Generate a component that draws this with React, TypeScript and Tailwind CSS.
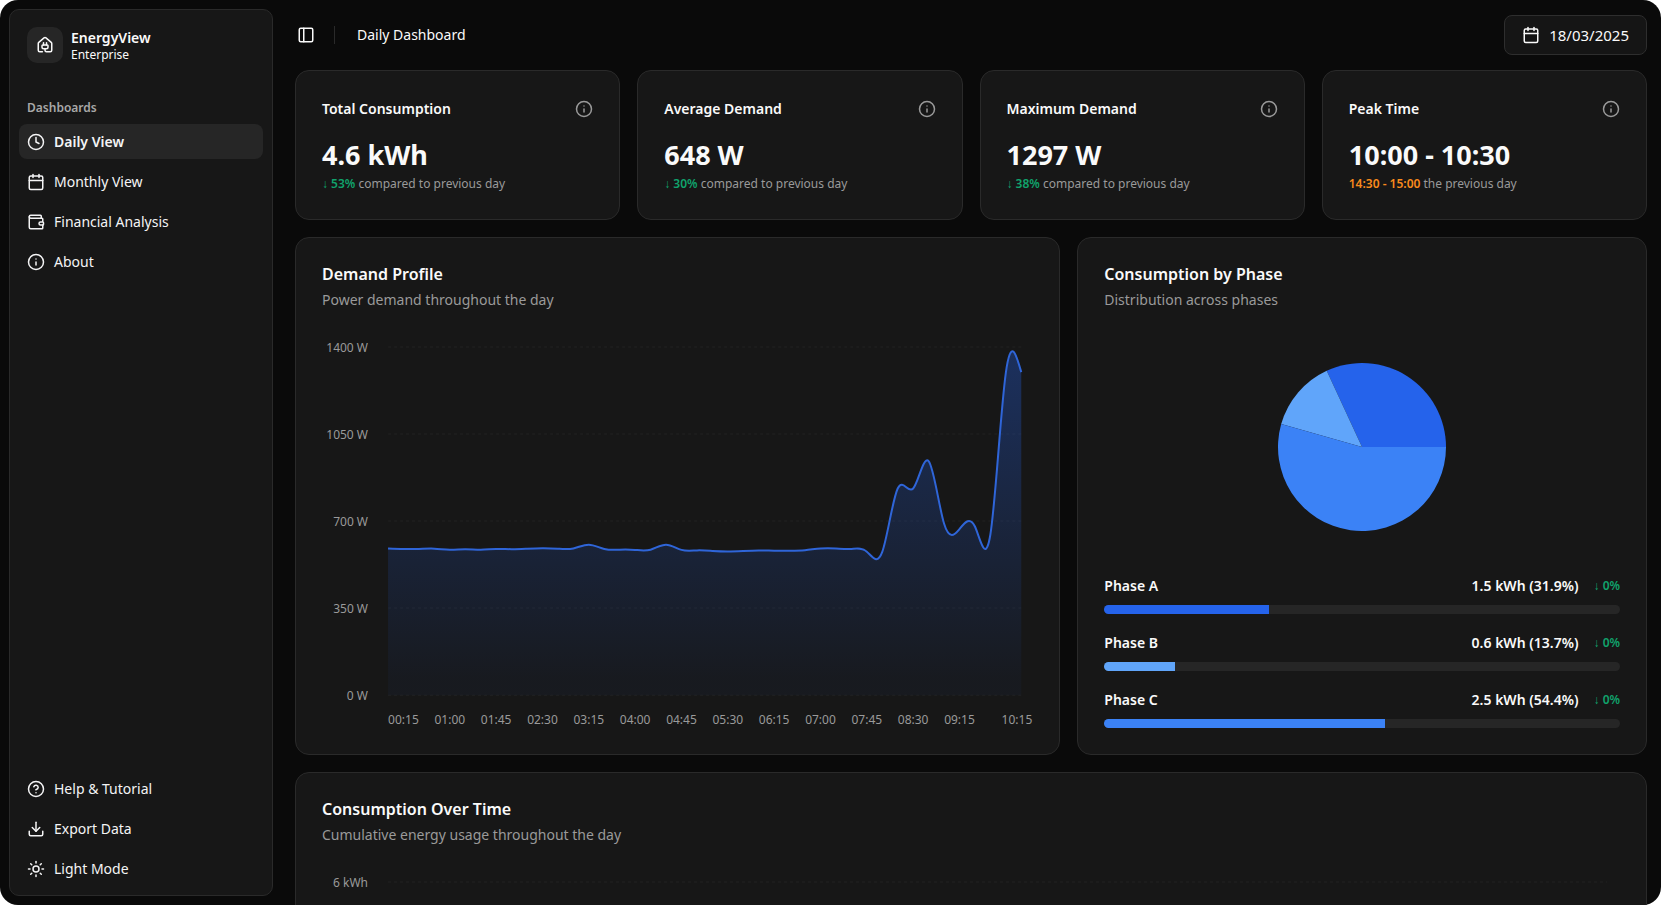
import React from "react";
import {
  Calendar,
  CircleHelp,
  Clock,
  Download,
  HousePlug,
  Info,
  PanelLeft,
  Sun,
  Wallet,
} from "lucide-react";
import type { LucideIcon } from "lucide-react";

type NavEntry = { label: string; icon: LucideIcon; active?: boolean };

const dashboards: NavEntry[] = [
  { label: "Daily View", icon: Clock, active: true },
  { label: "Monthly View", icon: Calendar },
  { label: "Financial Analysis", icon: Wallet },
  { label: "About", icon: Info },
];

const utilities: NavEntry[] = [
  { label: "Help & Tutorial", icon: CircleHelp },
  { label: "Export Data", icon: Download },
  { label: "Light Mode", icon: Sun },
];

const stats = [
  { title: "Total Consumption", value: "4.6 kWh", accent: "↓ 53%", note: "compared to previous day", tone: "text-[#10a36c]" },
  { title: "Average Demand", value: "648 W", accent: "↓ 30%", note: "compared to previous day", tone: "text-[#10a36c]" },
  { title: "Maximum Demand", value: "1297 W", accent: "↓ 38%", note: "compared to previous day", tone: "text-[#10a36c]" },
  { title: "Peak Time", value: "10:00 - 10:30", accent: "14:30 - 15:00", note: "the previous day", tone: "text-[#f98a1c]" },
];

const phases = [
  { name: "Phase A", kwh: "1.5 kWh", share: 31.9, fill: "#2563eb" },
  { name: "Phase B", kwh: "0.6 kWh", share: 13.7, fill: "#60a5fa" },
  { name: "Phase C", kwh: "2.5 kWh", share: 54.4, fill: "#3b82f6" },
];

// Average demand in watts for every quarter of an hour from 00:00 to 10:15.
const demand = [
  590, 588, 588, 589, 585, 587, 585, 588, 587, 589, 591, 589, 590, 605, 588, 585, 584, 585, 605, 584, 582,
  580, 578, 580, 582, 581, 581, 583, 590, 590, 588, 577, 576, 831, 831, 941, 690, 668, 678, 646, 1296, 1299,
];

const timeLabels = [
  "00:15", "01:00", "01:45", "02:30", "03:15", "04:00", "04:45", "05:30",
  "06:15", "07:00", "07:45", "08:30", "09:15",
];

const plot = { left: 66, right: 699, top: 12, bottom: 360, max: 1400 };
const step = (plot.right - plot.left) / (demand.length - 1);

// Control points of a natural cubic spline along one axis.
function controlPoints(v: number[]): [number[], number[]] {
  const n = v.length - 1;
  const a = new Array<number>(n);
  const b = new Array<number>(n);
  const r = new Array<number>(n);
  a[0] = 0;
  b[0] = 2;
  r[0] = v[0] + 2 * v[1];
  for (let i = 1; i < n - 1; i++) {
    a[i] = 1;
    b[i] = 4;
    r[i] = 4 * v[i] + 2 * v[i + 1];
  }
  a[n - 1] = 2;
  b[n - 1] = 7;
  r[n - 1] = 8 * v[n - 1] + v[n];
  for (let i = 1; i < n; i++) {
    const m = a[i] / b[i - 1];
    b[i] -= m;
    r[i] -= m * r[i - 1];
  }
  a[n - 1] = r[n - 1] / b[n - 1];
  for (let i = n - 2; i >= 0; i--) a[i] = (r[i] - a[i + 1]) / b[i];
  b[n - 1] = (v[n] + a[n - 1]) / 2;
  for (let i = 0; i < n - 1; i++) b[i] = 2 * v[i + 1] - a[i + 1];
  return [a, b];
}

function splinePath(xs: number[], ys: number[]): string {
  const [ax, bx] = controlPoints(xs);
  const [ay, by] = controlPoints(ys);
  let d = `M${xs[0]},${ys[0]}`;
  for (let i = 0; i < xs.length - 1; i++) {
    d += `C${ax[i]},${ay[i]},${bx[i]},${by[i]},${xs[i + 1]},${ys[i + 1]}`;
  }
  return d;
}

const demandLine = splinePath(
  demand.map((_, i) => plot.left + i * step),
  demand.map((w) => plot.bottom - (w / plot.max) * (plot.bottom - plot.top)),
);

function Card({ className = "", children }: { className?: string; children: React.ReactNode }) {
  return (
    <section className={`rounded-[14px] border border-[#2a2a2a] bg-[#171717] p-[26px] ${className}`}>{children}</section>
  );
}

function CardHeading({ title, subtitle }: { title: string; subtitle: string }) {
  return (
    <header>
      <h2 className="text-base leading-5 font-semibold text-[#fafafa]">{title}</h2>
      <p className="mt-[5px] text-sm leading-[22px] text-[#9a9a9a]">{subtitle}</p>
    </header>
  );
}

function NavButton({ entry }: { entry: NavEntry }) {
  const Icon = entry.icon;
  return (
    <li>
      <a
        href="#"
        aria-current={entry.active ? "page" : undefined}
        className={`flex h-[35px] items-center gap-[9px] rounded-lg px-2 text-sm text-[#f4f4f5] ${
          entry.active ? "bg-[#262626] font-semibold" : ""
        }`}
      >
        <Icon className="size-[18px]" />
        <span>{entry.label}</span>
      </a>
    </li>
  );
}

function Sidebar() {
  return (
    <aside className="flex w-[264px] shrink-0 flex-col rounded-[10px] border border-[#2a2a2a] bg-[#171717] px-[9px] pt-[17px] pb-[9px]">
      <div className="flex items-center gap-2 px-2">
        <div className="flex size-9 items-center justify-center rounded-[10px] bg-[#262626] text-[#fafafa]">
          <HousePlug className="size-[18px]" />
        </div>
        <div className="pt-[2px] text-[#fafafa]">
          <div className="text-sm leading-[17px] font-semibold">EnergyView</div>
          <div className="text-xs leading-[17px]">Enterprise</div>
        </div>
      </div>
      <nav aria-label="Dashboards" className="mt-9">
        <h2 className="px-2 text-xs leading-[18px] font-semibold text-[#a8a8a8]">Dashboards</h2>
        <ul className="mt-[7px] flex flex-col gap-[5px]">
          {dashboards.map((entry) => (
            <NavButton key={entry.label} entry={entry} />
          ))}
        </ul>
      </nav>
      <ul className="mt-auto flex flex-col gap-[5px]">
        {utilities.map((entry) => (
          <NavButton key={entry.label} entry={entry} />
        ))}
      </ul>
    </aside>
  );
}

function TopBar() {
  return (
    <header className="flex h-[70px] items-center">
      <button type="button" aria-label="Toggle sidebar" className="ml-[2px] text-[#fafafa]">
        <PanelLeft className="size-[18px]" />
      </button>
      <div className="ml-[19px] h-[18px] w-px bg-[#2a2a2a]" />
      <h1 className="ml-[22px] text-sm text-[#fafafa]">Daily Dashboard</h1>
      <button
        type="button"
        className="ml-auto flex h-10 items-center gap-[9px] rounded-lg border border-[#2e2e2e] bg-[#151515] px-[17px] text-[15px] text-[#fafafa]"
      >
        <Calendar className="size-[18px]" />
        18/03/2025
      </button>
    </header>
  );
}

function StatCard({ stat }: { stat: (typeof stats)[number] }) {
  return (
    <Card>
      <div className="flex h-6 items-center justify-between">
        <h2 className="text-sm font-semibold text-[#fafafa]">{stat.title}</h2>
        <button type="button" aria-label={`About ${stat.title}`} className="text-[#9a9a9a]">
          <Info className="size-[18px]" />
        </button>
      </div>
      <p className="mt-4 text-[27px] leading-9 font-bold text-[#fafafa]">{stat.value}</p>
      <p className="mt-[2px] text-xs leading-[18px] text-[#9a9a9a]">
        <span className={`font-semibold ${stat.tone}`}>{stat.accent}</span> {stat.note}
      </p>
    </Card>
  );
}

function DemandChart() {
  return (
    <svg viewBox="0 0 711 393" role="img" aria-label="Demand profile" className="mt-6 block h-auto w-full">
      <defs>
        <linearGradient id="demandFill" x1="0" y1="0" x2="0" y2="1">
          <stop offset="5%" stopColor="#2563eb" stopOpacity="0.32" />
          <stop offset="95%" stopColor="#2563eb" stopOpacity="0.04" />
        </linearGradient>
      </defs>
      {[1400, 1050, 700, 350, 0].map((w, i) => (
        <g key={w}>
          <line
            x1={plot.left}
            x2={plot.right}
            y1={plot.top + i * 87}
            y2={plot.top + i * 87}
            stroke="#222222"
            strokeDasharray="3 3"
          />
          <text x="46" y={plot.top + i * 87 + 5} textAnchor="end" fontSize="12" fill="#9a9a9a">
            {w} W
          </text>
        </g>
      ))}
      <path d={`${demandLine}L${plot.right},${plot.bottom}L${plot.left},${plot.bottom}Z`} fill="url(#demandFill)" />
      <path d={demandLine} fill="none" stroke="#2f65d8" strokeWidth="2" />
      {timeLabels.map((label, i) => (
        <text
          key={label}
          x={plot.left + (1 + 3 * i) * step}
          y="389"
          textAnchor="middle"
          fontSize="12"
          fill="#9a9a9a"
        >
          {label}
        </text>
      ))}
      <text x="710" y="389" textAnchor="end" fontSize="12" fill="#9a9a9a">
        10:15
      </text>
    </svg>
  );
}

function PhasePie() {
  let turned = 0;
  return (
    <svg viewBox="-84 -84 168 168" role="img" aria-label="Consumption by phase" className="size-[168px]">
      {phases.map((p) => {
        const a0 = (turned / 100) * 2 * Math.PI;
        turned += p.share;
        const a1 = (turned / 100) * 2 * Math.PI;
        const large = p.share > 50 ? 1 : 0;
        return (
          <path
            key={p.name}
            fill={p.fill}
            d={`M0,0L${84 * Math.cos(a0)},${-84 * Math.sin(a0)}A84,84,0,${large},0,${84 * Math.cos(a1)},${-84 * Math.sin(a1)}Z`}
          />
        );
      })}
    </svg>
  );
}

function PhaseList() {
  return (
    <ul className="flex flex-col gap-[17px]">
      {phases.map((p) => (
        <li key={p.name}>
          <div className="flex h-6 items-center text-sm font-semibold text-[#fafafa]">
            <span>{p.name}</span>
            <span className="ml-auto">
              {p.kwh} ({p.share}%)
            </span>
            <span className="ml-[15px] text-xs font-semibold text-[#10a36c]">↓ 0%</span>
          </div>
          <div className="mt-[7px] h-[9px] overflow-hidden rounded-full bg-[#262626]">
            <div className="h-full" style={{ width: `${p.share}%`, backgroundColor: p.fill }} />
          </div>
        </li>
      ))}
    </ul>
  );
}

function EnergyChart() {
  return (
    <svg viewBox="0 0 1298 280" role="img" aria-label="Consumption over time" className="mt-6 block h-auto w-full">
      <line x1="66" x2="1285" y1="12" y2="12" stroke="#222222" strokeDasharray="3 3" />
      <text x="46" y="17" textAnchor="end" fontSize="12" fill="#9a9a9a">
        6 kWh
      </text>
    </svg>
  );
}

export default function App() {
  return (
    <div className="flex h-screen gap-[22px] overflow-hidden rounded-[18px] bg-[#0a0a0a] py-[9px] pr-[14px] pl-[9px] font-['Noto_Sans','Open_Sans',sans-serif]">
      <Sidebar />
      <main className="-my-[9px] min-w-0 flex-1 overflow-hidden">
        <TopBar />
        <div className="flex flex-col gap-[17px]">
          <div className="grid grid-cols-4 gap-[17px]">
            {stats.map((stat) => (
              <StatCard key={stat.title} stat={stat} />
            ))}
          </div>
          <div className="grid grid-cols-7 gap-[17px]">
            <Card className="col-span-4">
              <CardHeading title="Demand Profile" subtitle="Power demand throughout the day" />
              <DemandChart />
            </Card>
            <Card className="col-span-3 flex flex-col">
              <CardHeading title="Consumption by Phase" subtitle="Distribution across phases" />
              <div className="flex flex-1 items-center justify-center pt-[8px]">
                <PhasePie />
              </div>
              <PhaseList />
            </Card>
          </div>
          <Card>
            <CardHeading title="Consumption Over Time" subtitle="Cumulative energy usage throughout the day" />
            <EnergyChart />
          </Card>
        </div>
      </main>
    </div>
  );
}
